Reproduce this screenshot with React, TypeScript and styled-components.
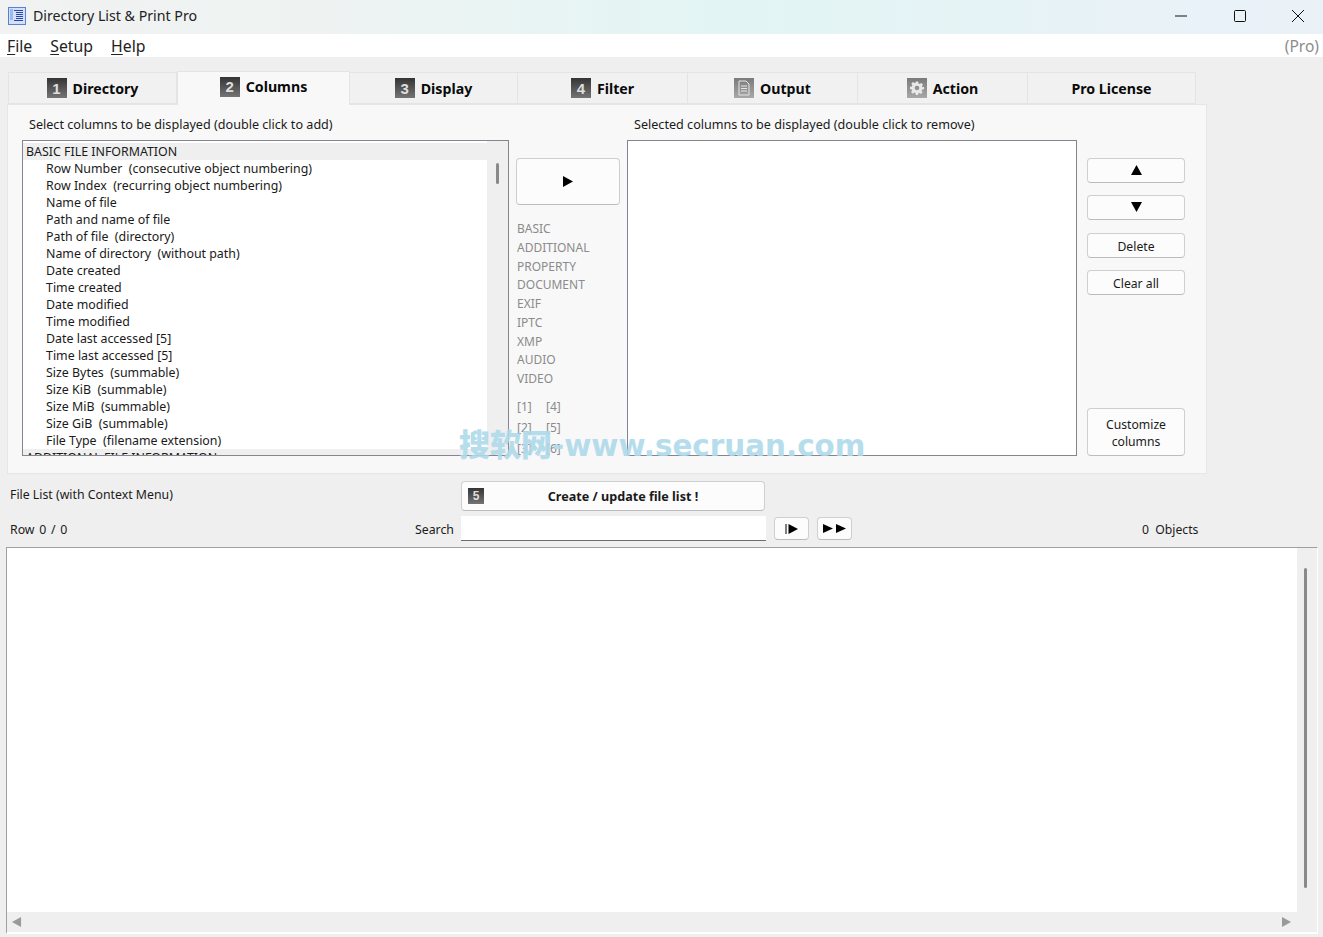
import React from 'react';
import styled, { createGlobalStyle } from 'styled-components';

const GlobalStyle = createGlobalStyle`
    html, body {
        margin: 0;
        padding: 0;
        background: #efefef;
    }
    body {
        font-family: "Noto Sans", "Open Sans", sans-serif;
        font-size: 12px;
        color: #1a1a1a;
    }
`;

const Window = styled.div`
    position: relative;
    width: 1323px;
    height: 937px;
    overflow: hidden;
    display: flex;
    flex-direction: column;
`;

const TitleBar = styled.div`
    height: 34px;
    display: flex;
    align-items: center;
    padding: 0 0 3px 8px;
    box-sizing: border-box;
    background: linear-gradient(90deg, #f1f2f2 0%, #eef3f2 25%, #e2f5f4 55%, #e8f2f7 85%, #eaf2f8 100%);
`;

const AppTitle = styled.span`
    margin-left: 7px;
    font-size: 14.2px;
    color: #222;
`;

const WindowControls = styled.div`
    margin-left: auto;
    display: flex;
    align-items: center;
    gap: 46.5px;
    padding-right: 19px;
`;

const MenuBar = styled.div`
    height: 23px;
    background: #fff;
    display: flex;
    align-items: center;
    padding: 0 4px 0 7px;
    gap: 18px;
    font-size: 15.8px;
`;

const MenuItem = styled.span`
    color: #222;
    u {
        text-underline-offset: 2px;
    }
`;

const ProNote = styled.span`
    margin-left: auto;
    color: #8c8c8c;
    font-size: 15.5px;
`;

const TabRow = styled.div`
    display: flex;
    align-items: flex-end;
    height: 47px;
    padding-left: 8px;
    position: relative;
    z-index: 1;
`;

const Tab = styled.div<{ $width: number; $active?: boolean }>`
    width: ${p => p.$width}px;
    height: ${p => (p.$active ? 34 : 32)}px;
    margin-bottom: ${p => (p.$active ? -1 : 0)}px;
    box-sizing: border-box;
    display: flex;
    align-items: center;
    justify-content: center;
    gap: 6px;
    padding-bottom: ${p => (p.$active ? 4 : 0)}px;
    background: ${p => (p.$active ? '#f8f8f8' : '#f1f1f1')};
    border: 1px solid #e4e4e4;
    border-left-width: ${p => (p.$active ? 1 : 0)}px;
    border-bottom-width: ${p => (p.$active ? 0 : 1)}px;
    font-size: 14.2px;
    font-weight: 700;
    color: #0a0a0a;
    &:first-child {
        border-left-width: 1px;
    }
`;

const Badge = styled.span<{ $light?: boolean; $small?: boolean }>`
    width: ${p => (p.$small ? 16 : 20)}px;
    height: ${p => (p.$small ? 16 : 20)}px;
    display: inline-flex;
    align-items: center;
    justify-content: center;
    font-family: "Liberation Sans", Arial, sans-serif;
    font-size: ${p => (p.$small ? 12 : 15)}px;
    font-weight: 700;
    color: #dedede;
    background: ${p =>
        p.$light
            ? 'linear-gradient(180deg, #7a7a7a 0%, #a8a8a8 100%)'
            : 'linear-gradient(180deg, #343434 0%, #747474 100%)'};
`;

const Panel = styled.div`
    margin-left: 7px;
    width: 1200px;
    height: 370px;
    box-sizing: border-box;
    background: #f8f8f8;
    border: 1px solid #e6e6e6;
    padding: 10px 21px 17px 14px;
    display: grid;
    grid-template-columns: 487px 104px 450px 101px;
    column-gap: 7px;
    grid-template-rows: 25px 316px;
`;

const Caption = styled.div<{ $indent: number; $span?: number }>`
    padding-left: ${p => p.$indent}px;
    grid-column: span ${p => p.$span ?? 1};
    line-height: 20px;
    font-size: 12.6px;
    white-space: nowrap;
`;

const ListBox = styled.div`
    box-sizing: border-box;
    height: 316px;
    border: 1px solid #85858f;
    background: #fff;
    display: flex;
    overflow: hidden;
`;

const ListRows = styled.div`
    flex: 1;
    padding-top: 2px;
    overflow: hidden;
`;

const ListRow = styled.div<{ $group?: boolean }>`
    height: 17px;
    line-height: 17px;
    padding-left: ${p => (p.$group ? 3 : 23)}px;
    background: ${p => (p.$group ? '#efefef' : 'transparent')};
    white-space: pre;
    font-size: 12.4px;
`;

const VTrack = styled.div<{ $width: number; $top: number; $shift?: number }>`
    width: ${p => p.$width}px;
    background: #efefef;
    padding-top: ${p => p.$top}px;
    padding-right: ${p => p.$shift ?? 0}px;
    box-sizing: border-box;
    display: flex;
    justify-content: center;
    flex-shrink: 0;
`;

const VThumb = styled.div<{ $height: number }>`
    width: 3px;
    height: ${p => p.$height}px;
    border-radius: 2px;
    background: #8a8a8a;
`;

const MiddleColumn = styled.div`
    height: 316px;
    overflow: hidden;
    padding-top: 18px;
    box-sizing: border-box;
`;

const Button = styled.div<{ $height: number; $bold?: boolean }>`
    height: ${p => p.$height}px;
    box-sizing: border-box;
    display: flex;
    align-items: center;
    justify-content: center;
    text-align: center;
    line-height: 17px;
    background: #fcfcfc;
    border: 1px solid #cfcfcf;
    border-bottom-color: #bcbcbc;
    border-radius: 4px;
    font-size: 12.2px;
    font-weight: ${p => (p.$bold ? 700 : 400)};
    color: #1a1a1a;
`;

const TextButton = styled(Button)<{ $gapTop?: number }>`
    padding-top: 1px;
    margin-top: ${p => p.$gapTop ?? 0}px;
`;

const CategoryList = styled.div`
    margin-top: 15px;
    padding-left: 1px;
    color: #8b8b8b;
    font-size: 12px;
`;

const Category = styled.div`
    height: 18.75px;
    line-height: 18.75px;
`;

const PageLinks = styled.div`
    margin-top: 7px;
    padding-left: 1px;
    display: grid;
    grid-template-columns: 29px 29px;
    grid-auto-rows: 21px;
    align-items: center;
    color: #8b8b8b;
    font-size: 12px;
`;

const ButtonColumn = styled.div`
    height: 316px;
    margin-left: 3px;
    padding-top: 18px;
    box-sizing: border-box;
    display: flex;
    flex-direction: column;
    gap: 12px;
`;

const CustomizeSlot = styled.div`
    margin-top: auto;
`;

const CreateRow = styled.div`
    height: 30px;
    margin-top: 7px;
    display: flex;
    align-items: center;
    padding-left: 10px;
`;

const RowLabel = styled.span<{ $width: number; $nudge?: number; $wordGap?: number }>`
    width: ${p => p.$width}px;
    flex-shrink: 0;
    font-size: 12.3px;
    white-space: nowrap;
    word-spacing: ${p => p.$wordGap ?? 0}px;
    padding-top: ${p => Math.max(p.$nudge ?? 0, 0)}px;
    padding-bottom: ${p => Math.max(-(p.$nudge ?? 0), 0)}px;
`;

const CreateButton = styled(Button)`
    position: relative;
    width: 304px;
    padding-left: 20px;
    font-size: 12.6px;
`;

const CreateBadge = styled.span`
    position: absolute;
    left: 6px;
    top: 6px;
    display: flex;
`;

const SearchRow = styled.div`
    height: 25px;
    margin-top: 5px;
    display: flex;
    align-items: center;
    padding-left: 10px;
`;

const SearchLabel = styled.span`
    width: 46px;
    font-size: 12.3px;
    padding-top: 2px;
`;

const SearchInput = styled.div`
    width: 305px;
    height: 25px;
    box-sizing: border-box;
    background: #fff;
    border-bottom: 1px solid #6e6e6e;
`;

const SmallButton = styled(Button)`
    width: 35px;
    margin-left: 8px;
`;

const ObjectCount = styled.span`
    margin-left: 290px;
    padding-top: 2px;
    font-size: 12.2px;
    white-space: pre;
`;

const FileList = styled.div`
    margin: 6px 5px 0 6px;
    height: 387px;
    box-sizing: border-box;
    border-top: 1px solid #a0a0a0;
    border-left: 1px solid #a0a0a0;
    border-right: 1px solid #fff;
    border-bottom: 2px solid #fff;
    display: grid;
    grid-template-columns: 1fr 20px;
    grid-template-rows: 1fr 20px;
    background: #fff;
`;

const FileArea = styled.div`
    background: #fff;
`;

const HTrack = styled.div`
    grid-column: span 2;
    background: #efefef;
    display: flex;
    align-items: center;
    justify-content: space-between;
    padding: 0 25px 0 5px;
`;

const Watermark = styled.div`
    position: absolute;
    left: 459px;
    top: 423px;
    font-family: "DejaVu Sans", "Noto Sans CJK SC", sans-serif;
    font-size: 29.4px;
    font-weight: 700;
    line-height: 40px;
    color: #aedaea;
    opacity: 0.9;
    white-space: nowrap;
    pointer-events: none;
`;

const WatermarkCjk = styled.span`
    font-family: "Noto Sans CJK SC", sans-serif;
    font-size: 31px;
    font-weight: 900;
`;

const AppIcon = () => (
    <svg width="18" height="18" viewBox="0 0 18 18">
        <rect x="0.5" y="0.5" width="17" height="17" fill="#d3e0f8" stroke="#5b7fd8" />
        <rect x="2" y="2" width="3" height="11" fill="#9dbaf0" />
        <path d="M6 3.5h9M8 5.5h7M8 7.5h7M8 9.5h7M8 11.5h7M6 13.5h9" stroke="#2a47a8" strokeWidth="1.2" />
    </svg>
);

const GearIcon = () => (
    <svg width="14" height="14" viewBox="0 0 24 24" fill="#e8e8e8">
        <path d="M10 1h4l.6 3.2 2.1.9 2.7-1.8 2.8 2.8-1.8 2.7.9 2.1L24 10v4l-3.2.6-.9 2.1 1.8 2.7-2.8 2.8-2.7-1.8-2.1.9L14 24h-4l-.6-3.2-2.1-.9-2.7 1.8-2.8-2.8 1.8-2.7-.9-2.1L0 14v-4l3.2-.6.9-2.1-1.8-2.7 2.8-2.8 2.7 1.8 2.1-.9zM12 8a4 4 0 1 0 0 8 4 4 0 0 0 0-8z" fillRule="evenodd" />
    </svg>
);

const DocIcon = () => (
    <svg width="14" height="16" viewBox="0 0 14 16" fill="none" stroke="#e6e6e6">
        <path d="M2 1h7l3 3v11H2z" />
        <path d="M4 6h6M4 8.5h6M4 11h6" />
    </svg>
);

const Triangle = ({ dir, size = 11, color = '#000' }: { dir: 'up' | 'down' | 'right' | 'left'; size?: number; color?: string }) => {
    const points = {
        up: '0,10 5.5,0 11,10',
        down: '0,0 11,0 5.5,10',
        right: '0,0 10,5.5 0,11',
        left: '10,0 0,5.5 10,11',
    }[dir];
    return (
        <svg width={size} height={size} viewBox="0 0 11 11">
            <polygon points={points} fill={color} />
        </svg>
    );
};

const WinMinimize = () => (
    <svg width="12" height="12" viewBox="0 0 12 12">
        <path d="M0 6h12" stroke="#111" />
    </svg>
);
const WinMaximize = () => (
    <svg width="12" height="12" viewBox="0 0 12 12">
        <rect x="0.5" y="0.5" width="11" height="11" rx="1" fill="none" stroke="#111" />
    </svg>
);
const WinClose = () => (
    <svg width="12" height="12" viewBox="0 0 12 12">
        <path d="M0 0l12 12M12 0L0 12" stroke="#111" />
    </svg>
);

const StepIcon = () => (
    <svg width="14" height="12" viewBox="0 0 14 12">
        <path d="M1 1v10" stroke="#000" />
        <polygon points="3.5,1 13,6 3.5,11" />
    </svg>
);
const ForwardIcon = () => (
    <svg width="23" height="11" viewBox="0 0 23 11">
        <polygon points="0,1 10,5.5 0,10" />
        <polygon points="13,1 23,5.5 13,10" />
    </svg>
);

const columns = [
    'Row Number  (consecutive object numbering)',
    'Row Index  (recurring object numbering)',
    'Name of file',
    'Path and name of file',
    'Path of file  (directory)',
    'Name of directory  (without path)',
    'Date created',
    'Time created',
    'Date modified',
    'Time modified',
    'Date last accessed [5]',
    'Time last accessed [5]',
    'Size Bytes  (summable)',
    'Size KiB  (summable)',
    'Size MiB  (summable)',
    'Size GiB  (summable)',
    'File Type  (filename extension)',
];

const categories = ['BASIC', 'ADDITIONAL', 'PROPERTY', 'DOCUMENT', 'EXIF', 'IPTC', 'XMP', 'AUDIO', 'VIDEO'];
const pageLinks = ['[1]', '[4]', '[2]', '[5]', '[3]', '[6]'];

const App = () => (
    <Window>
        <GlobalStyle />
        <TitleBar>
            <AppIcon />
            <AppTitle>Directory List &amp; Print Pro</AppTitle>
            <WindowControls>
                <WinMinimize />
                <WinMaximize />
                <WinClose />
            </WindowControls>
        </TitleBar>
        <MenuBar>
            <MenuItem><u>F</u>ile</MenuItem>
            <MenuItem><u>S</u>etup</MenuItem>
            <MenuItem><u>H</u>elp</MenuItem>
            <ProNote>(Pro)</ProNote>
        </MenuBar>
        <TabRow>
            <Tab $width={169}><Badge>1</Badge>Directory</Tab>
            <Tab $width={173} $active><Badge>2</Badge>Columns</Tab>
            <Tab $width={168}><Badge>3</Badge>Display</Tab>
            <Tab $width={170}><Badge>4</Badge>Filter</Tab>
            <Tab $width={170}><Badge $light><DocIcon /></Badge>Output</Tab>
            <Tab $width={170}><Badge $light><GearIcon /></Badge>Action</Tab>
            <Tab $width={168}>Pro License</Tab>
        </TabRow>
        <Panel>
            <Caption $indent={7}>Select columns to be displayed (double click to add)</Caption>
            <span />
            <Caption $indent={7} $span={2}>Selected columns to be displayed (double click to remove)</Caption>
            <ListBox>
                <ListRows>
                    <ListRow $group>BASIC FILE INFORMATION</ListRow>
                    {columns.map(c => (
                        <ListRow key={c}>{c}</ListRow>
                    ))}
                    <ListRow $group>ADDITIONAL FILE INFORMATION</ListRow>
                </ListRows>
                <VTrack $width={21} $top={22}>
                    <VThumb $height={21} />
                </VTrack>
            </ListBox>
            <MiddleColumn>
                <Button $height={47}><Triangle dir="right" /></Button>
                <CategoryList>
                    {categories.map(c => (
                        <Category key={c}>{c}</Category>
                    ))}
                </CategoryList>
                <PageLinks>
                    {pageLinks.map(l => (
                        <span key={l}>{l}</span>
                    ))}
                </PageLinks>
            </MiddleColumn>
            <ListBox />
            <ButtonColumn>
                <Button $height={25}><Triangle dir="up" /></Button>
                <Button $height={25}><Triangle dir="down" /></Button>
                <TextButton $height={25} $gapTop={1}>Delete</TextButton>
                <TextButton $height={25}>Clear all</TextButton>
                <CustomizeSlot>
                    <TextButton $height={48}>Customize<br />columns</TextButton>
                </CustomizeSlot>
            </ButtonColumn>
        </Panel>
        <CreateRow>
            <RowLabel $width={451} $nudge={-4}>File List (with Context Menu)</RowLabel>
            <CreateButton $height={30} $bold>
                <CreateBadge><Badge $small>5</Badge></CreateBadge>
                Create / update file list !
            </CreateButton>
        </CreateRow>
        <SearchRow>
            <RowLabel $width={405} $nudge={2} $wordGap={1.5}>Row 0 / 0</RowLabel>
            <SearchLabel>Search</SearchLabel>
            <SearchInput />
            <SmallButton $height={23}><StepIcon /></SmallButton>
            <SmallButton $height={23}><ForwardIcon /></SmallButton>
            <ObjectCount>0  Objects</ObjectCount>
        </SearchRow>
        <FileList>
            <FileArea />
            <VTrack $width={20} $top={20} $shift={3}>
                <VThumb $height={320} />
            </VTrack>
            <HTrack>
                <Triangle dir="left" size={10} color="#9a9a9a" />
                <Triangle dir="right" size={10} color="#9a9a9a" />
            </HTrack>
        </FileList>
        <Watermark><WatermarkCjk>搜软网</WatermarkCjk>-www.secruan.com</Watermark>
    </Window>
);

export default App;
